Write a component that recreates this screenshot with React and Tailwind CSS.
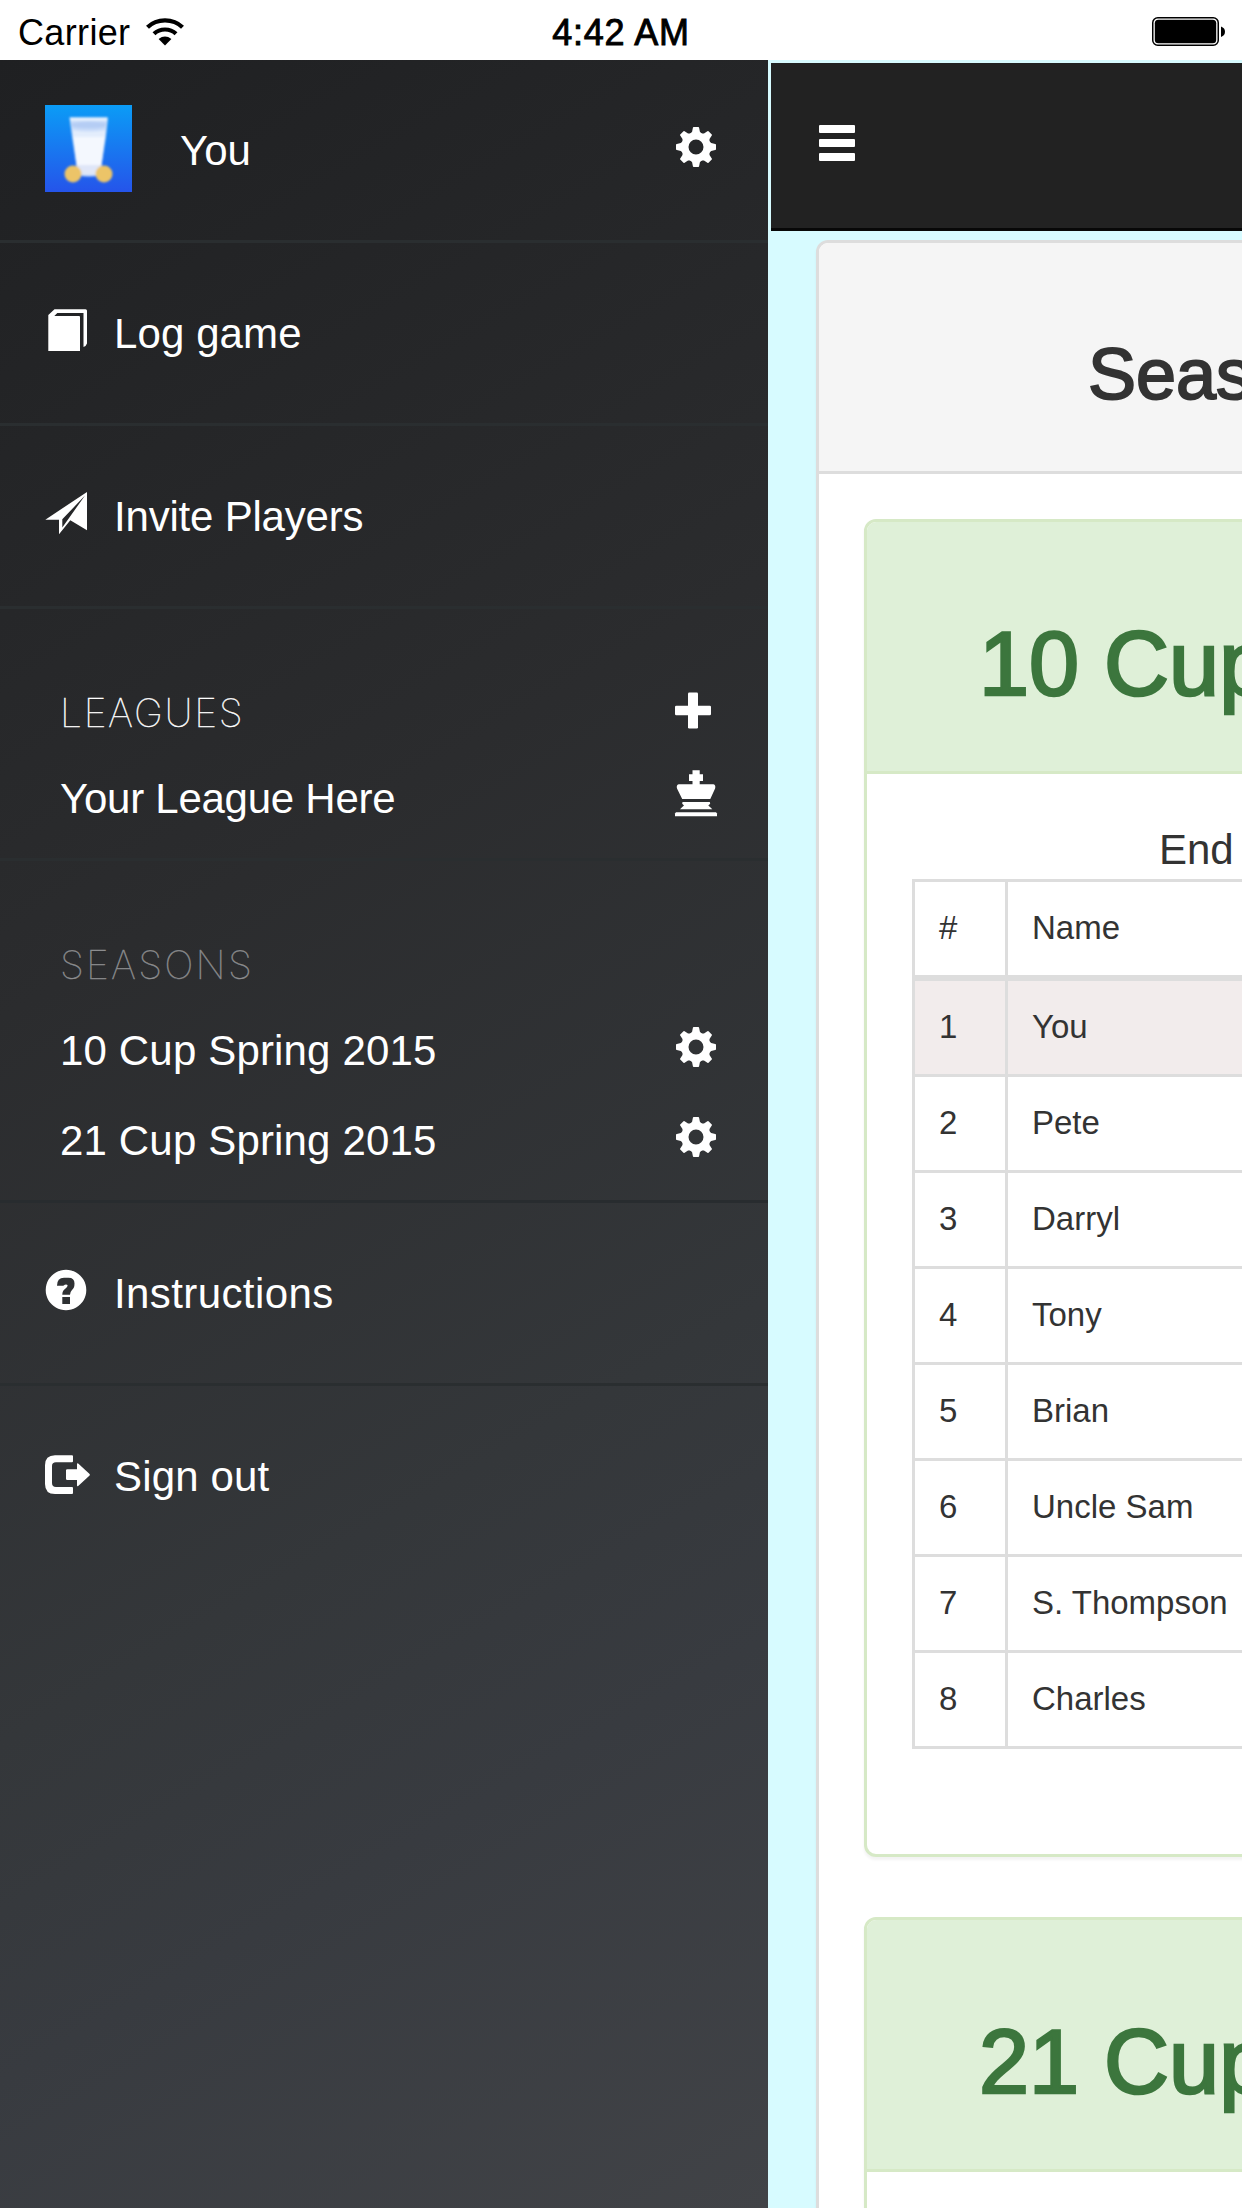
const TEETH = [0, 45, 90, 135, 180, 225, 270, 315];

function Gear({ className = "" }) {
  return (
    <svg width="42" height="40" viewBox="-21 -20 42 40" className={"shrink-0 " + className} fill="#fff">
      {TEETH.map((a) => (
        <path key={a} transform={`rotate(${a})`} d="M-2.3 -20H2.3Q3 -20 3.1 -19.2L3.9 -15.2L6.5 -12.5L0 -9L-6.5 -12.5L-3.9 -15.2L-3.1 -19.2Q-3 -20 -2.3 -20Z" />
      ))}
      <circle r="11" fill="none" stroke="#fff" strokeWidth="7" />
    </svg>
  );
}

function Plus() {
  return (
    <svg width="42" height="60" viewBox="0 0 42 60" fill="#fff" className="shrink-0">
      <rect x="13" y="10.5" width="10" height="36" rx="1.3" />
      <rect x="0" y="23.7" width="36" height="9.6" rx="1.3" />
    </svg>
  );
}

function King() {
  return (
    <svg width="42" height="60" viewBox="0 0 42 60" fill="#fff" className="shrink-0 overflow-visible">
      <path d="M17.5 1.2H24.700V5.200H28V12H24.700V15.300H38.500Q41 16.200 40.100 19.600L35.300 30H7.200L2 19.600Q1 16.200 3.700 15.300H17.500V12H14V5.200H17.500Z" />
      <path d="M7.500 33H34.800L35.200 34.800L33.300 36.500L35 38L37.300 40.300H5L7.300 38L9 36.500L7.200 34.800Z" />
      <path d="M1 43.200H41L42 44.500V47.200H0V44.500Z" />
    </svg>
  );
}

const ICONS = {
  book: "M3.3 48V12L9.5 6.3H40.5Q42 6.3 42 7.8V40.5L40.5 43L38.5 44V10H12.3L9.3 13H34Q35 13 35 14V48Z",
  plane: "M42 6L.3 33.7H14V48.3L25.3 34.3L42 44.3ZM17.3 33.3L40 9.5L17.3 41.5Z",
  help: "M21 6.7a20.3 20.3 0 1 0 .01 0ZM17.3 34H25V41H17.3ZM12 22.7Q12 14.7 19 14.7H23.5Q29.5 14.7 29.5 20.5Q29.5 25 27 27Q25.2 28.8 25 31.7H17.3Q17.3 27.5 20.5 25.5Q22.9 23.8 22.5 22Q21 20.6 18.3 22.7Z",
  exit: "M10 9.3H27Q28 9.3 28 10.3V15.3Q28 16.3 27 16.3H11Q7 16.3 7 20V37Q7 41 11 41H27Q28 41 28 42V47Q28 48 27 48H10Q0 48 0 38V19.3Q0 9.3 10 9.3ZM22.2 23.3H32V17.8Q32.3 17 33.2 17.6L44.6 28Q45.2 28.8 44.6 29.6L33.2 40Q32.3 40.6 32 39.6V34H22.2Q21 34 21 32.8V24.5Q21 23.3 22.2 23.3Z",
};

function MenuRow({ icon, children, last, spacing = "" }) {
  return (
    <div className={"flex h-[183px] pl-[45px] pt-[60px] " + (last ? "" : "border-b-3 border-[#2a2e30]")}>
      <svg width="69" height="60" viewBox="0 0 69 60" fill="#fff" className="shrink-0">
        <path fillRule="evenodd" d={ICONS[icon]} />
      </svg>
      <span className={"pt-[1px] " + spacing}>{children}</span>
    </div>
  );
}

function Avatar() {
  return (
    <svg width="87" height="87" viewBox="0 0 87 87" className="-mt-[15px] shrink-0">
      <defs>
        <linearGradient id="sky" x1="0" y1="0" x2="0" y2="1">
          <stop offset="0" stopColor="#0b9cf6" />
          <stop offset="1" stopColor="#2554ea" />
        </linearGradient>
        <filter id="soft">
          <feGaussianBlur stdDeviation="1.1" />
        </filter>
      </defs>
      <rect width="87" height="87" fill="url(#sky)" />
      <g filter="url(#soft)">
        <path d="M24.500 12.500H63L61 31L55 70Q44 73 33 70L27 31Z" fill="#c9dcf9" />
        <path d="M28 32H60L56.500 60H31.500Z" fill="#f4f8fe" />
        <path d="M31.500 60H56.500L55 68Q44 71 34 68Z" fill="#dfe6f8" />
        <path d="M26.500 18Q44 15 61 18L60.300 22Q44 25 27.200 22Z" fill="#b5cdf4" />
        <path d="M27.500 25Q44 28 60.500 25L60 32H28Z" fill="#e3edfc" />
        <path d="M25 14H62" stroke="#e8f2fe" strokeWidth="3" />
        <circle cx="28" cy="69" r="8.500" fill="#ecc468" />
        <circle cx="59" cy="69" r="8.500" fill="#ecc468" />
      </g>
    </svg>
  );
}

function StatusBar() {
  return (
    <header className="grid h-[60px] shrink-0 grid-cols-3 items-center bg-white text-[36px] leading-[60px] text-black">
      <div className="flex items-center gap-[16px] pl-[18px]">
        <span className="pt-[3px] tracking-[0.35px]">Carrier</span>
        <svg width="38" height="28" viewBox="0 0 38 28" fill="none" stroke="#000" strokeWidth="4.2">
          <path d="M1.5 9.2Q8.5 2.3 19 2.3T36.500 9.2" />
          <path d="M8 15.8Q12.500 11.500 19 11.500T30 15.800" />
          <path d="M12.600 21Q19 16.200 25.400 21L19 27.500Z" fill="#000" stroke="none" />
        </svg>
      </div>
      <span className="pt-[3px] text-center tracking-[0.75px] [-webkit-text-stroke:0.9px_#000]">4:42 AM</span>
      <svg width="74" height="30" viewBox="0 0 74 30" className="mr-[16px] justify-self-end">
        <rect x=".75" y=".75" width="65.500" height="27.500" rx="5" fill="none" stroke="#000" strokeWidth="1.500" />
        <rect x="2.800" y="2.800" width="61.400" height="23.400" rx="3.500" />
        <path d="M69 9.500Q73 11 73 14.700T69 20Z" />
      </svg>
    </header>
  );
}

function Sidebar() {
  return (
    <aside className="w-[768px] shrink-0 bg-[linear-gradient(150deg,#1f2022_0%,#2b2c2e_37%,#34373a_65%,#383b40_78%,#414347_100%)] text-[42px] leading-[60px] whitespace-nowrap text-white">
      <div className="flex h-[183px] border-b-3 border-[#2a2e30] pt-[60px] pr-[51px] pl-[45px]">
        <Avatar />
        <span className="ml-[48px] flex-1 pt-[1px]">You</span>
        <Gear className="mt-[7px]" />
      </div>
      <MenuRow icon="book" spacing="tracking-[0.1px]">Log game</MenuRow>
      <MenuRow icon="plane" spacing="tracking-[-0.2px]">Invite Players</MenuRow>
      <section className="h-[252px] border-b-3 border-[#2a2e30] pt-[73px] pr-[51px] pl-[60px]">
        <div className="flex justify-between">
          <h2 className="pt-[1px] font-['Inter'] text-[39px] font-thin tracking-[1.7px] [-webkit-text-stroke:0.4px_#fff]">LEAGUES</h2>
          <Plus />
        </div>
        <div className="mt-[26px] flex justify-between">
          <span className="tracking-[-0.25px]">Your League Here</span>
          <King />
        </div>
      </section>
      <section className="h-[342px] border-b-3 border-[#282c2f] pt-[74px] pr-[51px] pl-[60px]">
        <h2 className="font-['Inter'] text-[39px] font-thin tracking-[2.2px] text-[#8c8d8f] [-webkit-text-stroke:0.4px_#8c8d8f]">SEASONS</h2>
        <div className="mt-[26px] flex justify-between">
          <span className="tracking-[0.16px]">10 Cup Spring 2015</span>
          <Gear className="mt-[6px]" />
        </div>
        <div className="mt-[30px] flex justify-between">
          <span className="tracking-[0.16px]">21 Cup Spring 2015</span>
          <Gear className="mt-[6px]" />
        </div>
      </section>
      <MenuRow icon="help" spacing="tracking-[0.4px]">Instructions</MenuRow>
      <MenuRow icon="exit" last spacing="tracking-[0.15px]">Sign out</MenuRow>
    </aside>
  );
}

const PLAYERS = ["You", "Pete", "Darryl", "Tony", "Brian", "Uncle Sam", "S. Thompson", "Charles"];

function SeasonPanel({ title, children }) {
  return (
    <section className="h-[1338px] shrink-0 rounded-[12px] border-3 border-[#d6e9c6] bg-white shadow-[0_3px_3px_rgba(0,0,0,0.05)]">
      <h3 className="h-[252px] rounded-t-[9px] border-b-3 border-[#d6e9c6] bg-[#dff0d8] pt-[92px] pl-[112px] text-[90px] leading-[100px] text-[#3c763d] [-webkit-text-stroke:2.6px_#3c763d]">
        {title}
      </h3>
      {children}
    </section>
  );
}

function Cells({ rank, name, className }) {
  return (
    <div className={"flex leading-[91px] " + className}>
      <span className="w-[93px] shrink-0 border-r-3 border-[#ddd] pl-[24px]">{rank}</span>
      <span className="pl-[24px]">{name}</span>
    </div>
  );
}

function Main() {
  return (
    <main className="flex min-w-0 flex-1 flex-col overflow-hidden bg-[#d7fbff] text-[#333]">
      <nav className="mt-[3px] ml-[3px] flex h-[168px] shrink-0 flex-col gap-[6px] border-b-3 border-[#080808] bg-[#222] pt-[62px] pl-[48px]">
        <i className="h-[8px] w-[36px] rounded-[1px] bg-white" />
        <i className="h-[8px] w-[36px] rounded-[1px] bg-white" />
        <i className="h-[8px] w-[36px] rounded-[1px] bg-white" />
      </nav>
      <section className="mt-[9px] ml-[48px] h-[2400px] w-[1146px] shrink-0 rounded-[12px] border-3 border-[#ddd] bg-white whitespace-nowrap shadow-[0_3px_3px_rgba(0,0,0,0.05)]">
        <h2 className="h-[231px] rounded-t-[9px] border-b-3 border-[#ddd] bg-[#f5f5f5] pt-[91px] pl-[269px] text-[72px] leading-[80px] [-webkit-text-stroke:2px_#333]">
          Seasons
        </h2>
        <div className="flex flex-col gap-[60px] px-[45px] pt-[45px]">
          <SeasonPanel title="10 Cup Spring 2015">
            <div className="pt-[45px] pl-[45px]">
              <p className="h-[60px] pt-[1px] pl-[247px] text-[42px] leading-[60px]">End</p>
              <div className="border-3 border-[#ddd] text-[33px]">
                <Cells rank="#" name="Name" className="h-[99px] border-b-6 border-[#ddd]" />
                {PLAYERS.map((name, i) => (
                  <Cells
                    key={name}
                    rank={i + 1}
                    name={name}
                    className={
                      (i === 0 ? "bg-[#f2ecec] " : "") +
                      (i < PLAYERS.length - 1 ? "h-[96px] border-b-3 border-[#ddd]" : "h-[93px]")
                    }
                  />
                ))}
              </div>
            </div>
          </SeasonPanel>
          <SeasonPanel title="21 Cup Spring 2015" />
        </div>
      </section>
    </main>
  );
}

export default function App() {
  return (
    <div className="flex h-[2208px] w-[1242px] flex-col overflow-hidden font-['Liberation_Sans',Arial,sans-serif]">
      <StatusBar />
      <div className="flex min-h-0 flex-1">
        <Sidebar />
        <Main />
      </div>
    </div>
  );
}
